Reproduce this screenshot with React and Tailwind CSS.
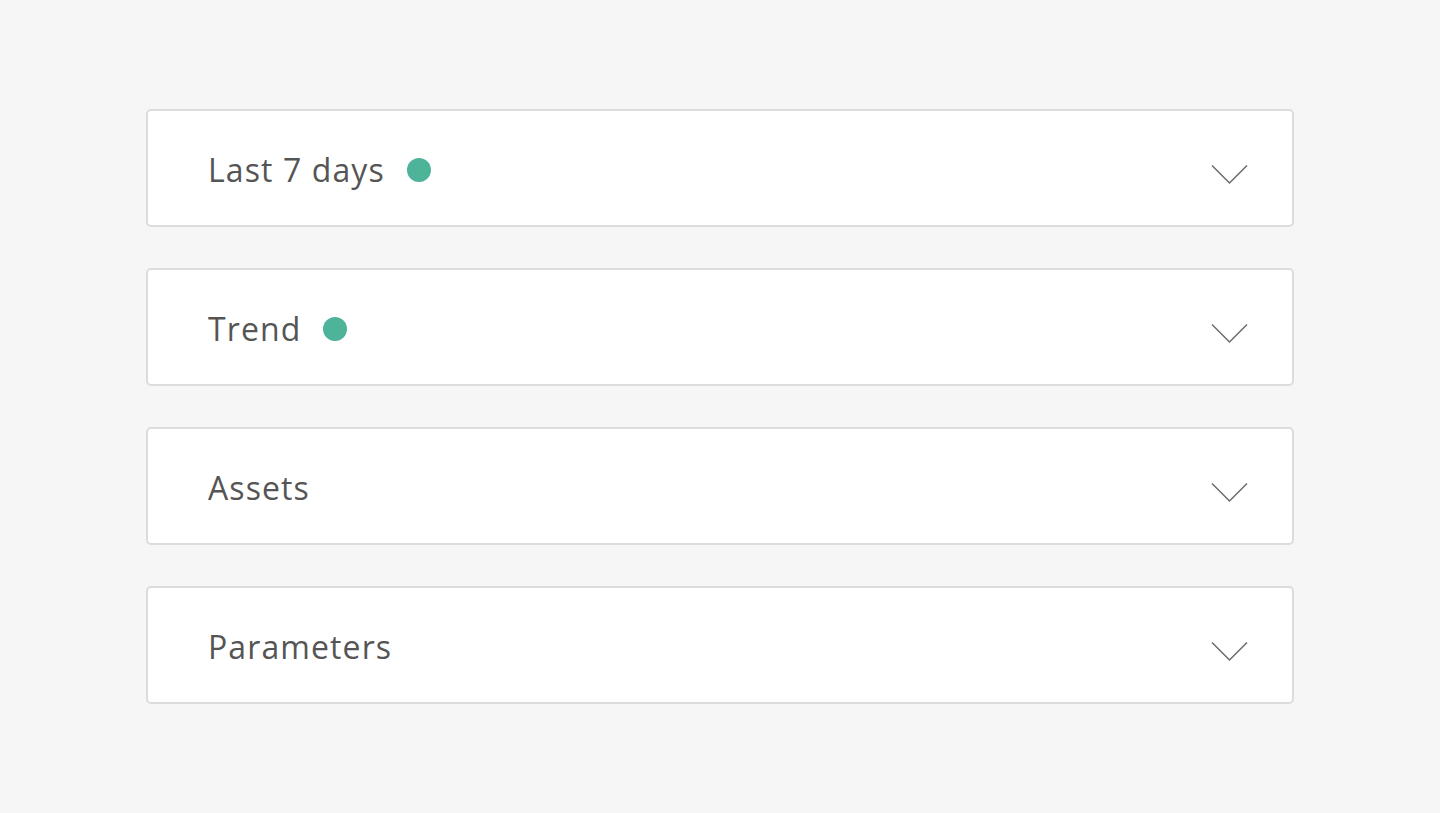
import React from 'react';

const sections = [
  { label: 'Last 7 days', active: true },
  { label: 'Trend', active: true },
  { label: 'Assets', active: false },
  { label: 'Parameters', active: false },
];

function Chevron() {
  return (
    <svg width="37" height="21" viewBox="0 0 37 21" fill="none" className="mt-[8px]">
      <path d="M1 1.5 L18.5 19 L36 1.5" stroke="#6b6b6b" strokeWidth="1.5" />
    </svg>
  );
}

export default function App() {
  return (
    <div className="min-h-[813px] bg-[#f6f6f6] pt-[109px] font-['Open_Sans','Liberation_Sans',sans-serif]">
      <div className="mx-auto w-[1148px] flex flex-col gap-[41px]">
        {sections.map((s) => (
          <button
            key={s.label}
            className="h-[118px] w-full flex items-center justify-between bg-white border-2 border-[#dcdcdc] rounded-[5px] pl-[60px] pr-[44px] pt-[4px] text-left"
          >
            <span className="flex items-center gap-[22px]">
              <span className="text-[32px] tracking-[1.1px] text-[#555555] leading-none">{s.label}</span>
              {s.active && <span className="w-[24px] h-[24px] rounded-full bg-[#4db399]" />}
            </span>
            <Chevron />
          </button>
        ))}
      </div>
    </div>
  );
}
